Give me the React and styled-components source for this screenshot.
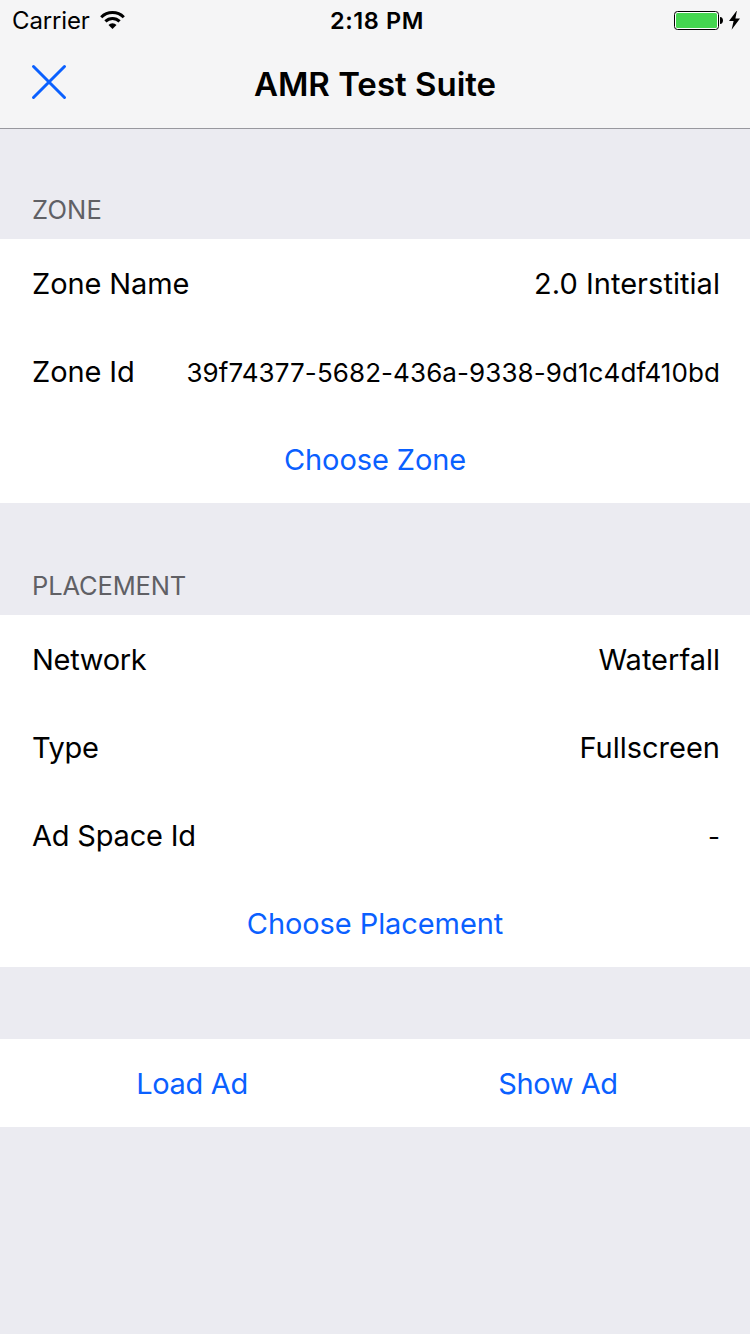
import React from "react";
import styled, { createGlobalStyle } from "styled-components";

const Global = createGlobalStyle`
  * { box-sizing: border-box; }
  body { margin: 0; background: #ebebf1; font-family: Inter, "Liberation Sans", sans-serif; color: #000; }
`;
const Screen = styled.main`
  width: 750px; height: 1334px; background: #ebebf1; overflow: hidden;
`;
const Header = styled.header`
  height: 129px; background: #f5f5f6; border-bottom: 1px solid #98989e;
`;
const StatusBar = styled.div`
  height: 40px; display: grid; grid-template-columns: 1fr auto 1fr; align-items: center; padding: 1px 10px 0 12px;
`;
const StatusSide = styled.div`
  display: flex; align-items: center; gap: ${(p) => p.$gap}px; justify-content: ${(p) => (p.$end ? "flex-end" : "flex-start")};
`;
const Text = styled.span`
  display: block; margin: 0; white-space: nowrap; line-height: 1.2;
  font-size: ${(p) => p.$size || 29}px;
  font-weight: ${(p) => p.$weight || 400};
  letter-spacing: ${(p) => p.$track || 0}px;
`;
const StatusText = styled(Text)`
  padding: 2px 0 0 ${(p) => p.$indent || 0}px;
`;
const Title = styled(Text)`
  padding-top: 2px;
`;
const NavBar = styled.div`
  height: 88px; display: grid; grid-template-columns: 1fr auto 1fr; align-items: center; padding: 0 31px;
`;
const IconButton = styled.button`
  border: 0; background: none; padding: 0; width: 36px; height: 36px; display: block; margin-top: -4px;
`;
const SectionTitle = styled.h2`
  margin: 0; height: ${(p) => p.$height}px; padding: 0 32px 13px; display: flex; align-items: flex-end;
  color: #606065;
`;
const Group = styled.section`background: #fff;`;
const Row = styled.div`
  height: 88px; display: flex; align-items: center; justify-content: space-between; padding: 2px 30px 0 32px;
`;
const SmallValue = styled(Text)`
  font-size: 26px; padding-top: 2px;
`;
const Action = styled.button`
  flex: 1; height: 88px; border: 0; background: none; color: #0a60ff; font-family: inherit;
  display: flex; align-items: center; justify-content: center; padding: 2px 0 0;
`;
const Actions = styled.div`
  display: flex; margin-top: ${(p) => p.$top || 0}px; padding: 0 ${(p) => p.$inset || 0}px; background: #fff;
`;

export default function App() {
  return (
    <Screen>
      <Global />
      <Header>
        <StatusBar>
          <StatusSide $gap={10}>
            <StatusText $size={24} $track={-0.15}>Carrier</StatusText>
            <svg width="25" height="18" viewBox="0 0 25 18" fill="none" stroke="#000" strokeWidth="3">
              <path d="M1.2 6.2a16 16 0 0 1 22.6 0M5.4 10.4a10 10 0 0 1 14.2 0" />
              <path d="M12.5 18l-4-4a5.7 5.7 0 0 1 8 0z" fill="#000" stroke="none" />
            </svg>
          </StatusSide>
          <StatusText $size={23.5} $weight={600} $track={0.6} $indent={2}>2:18 PM</StatusText>
          <StatusSide $end $gap={6}>
            <svg width="49" height="20" viewBox="0 0 49 20">
              <rect x=".5" y=".5" width="44" height="18" rx="3" fill="#fff" stroke="#000" />
              <rect x="2" y="2" width="41" height="15" rx="1.5" fill="#44d650" />
              <path d="M46 6c4 0 4 7 0 7z" />
            </svg>
            <svg width="11" height="20" viewBox="0 0 11 20"><path d="M8 -.7L0 10h4.6L2.6 18.8 11 7.4H6.4z" /></svg>
          </StatusSide>
        </StatusBar>
        <NavBar>
          <IconButton aria-label="Close">
            <svg width="36" height="36" viewBox="0 0 36 36" fill="none" stroke="#0a60ff" strokeWidth="3" strokeLinecap="round"><path d="M2.5 2.5l31 31M33.5 2.5l-31 31" /></svg>
          </IconButton>
          <Title as="h1" $size={33} $weight={600}>AMR Test Suite</Title>
        </NavBar>
      </Header>
      <SectionTitle $height={110}><Text $size={25.5} $track={0.2}>ZONE</Text></SectionTitle>
      <Group>
        <Row><Text $track={-0.1}>Zone Name</Text><Text $track={0.04}>2.0 Interstitial</Text></Row>
        <Row><Text $track={-0.1}>Zone Id</Text><SmallValue $track={0.08}>39f74377-5682-436a-9338-9d1c4df410bd</SmallValue></Row>
        <Actions><Action><Text $track={-0.1}>Choose Zone</Text></Action></Actions>
      </Group>
      <SectionTitle $height={112}><Text $size={25.5} $track={-0.15}>PLACEMENT</Text></SectionTitle>
      <Group>
        <Row><Text $track={-0.3}>Network</Text><Text>Waterfall</Text></Row>
        <Row><Text $track={-0.3}>Type</Text><Text>Fullscreen</Text></Row>
        <Row><Text $track={-0.2}>Ad Space Id</Text><SmallValue>-</SmallValue></Row>
        <Actions><Action><Text $track={-0.08}>Choose Placement</Text></Action></Actions>
      </Group>
      <Actions $top={72} $inset={9}>
        <Action><Text $track={-0.35}>Load Ad</Text></Action>
        <Action><Text $track={-0.4}>Show Ad</Text></Action>
      </Actions>
    </Screen>
  );
}
